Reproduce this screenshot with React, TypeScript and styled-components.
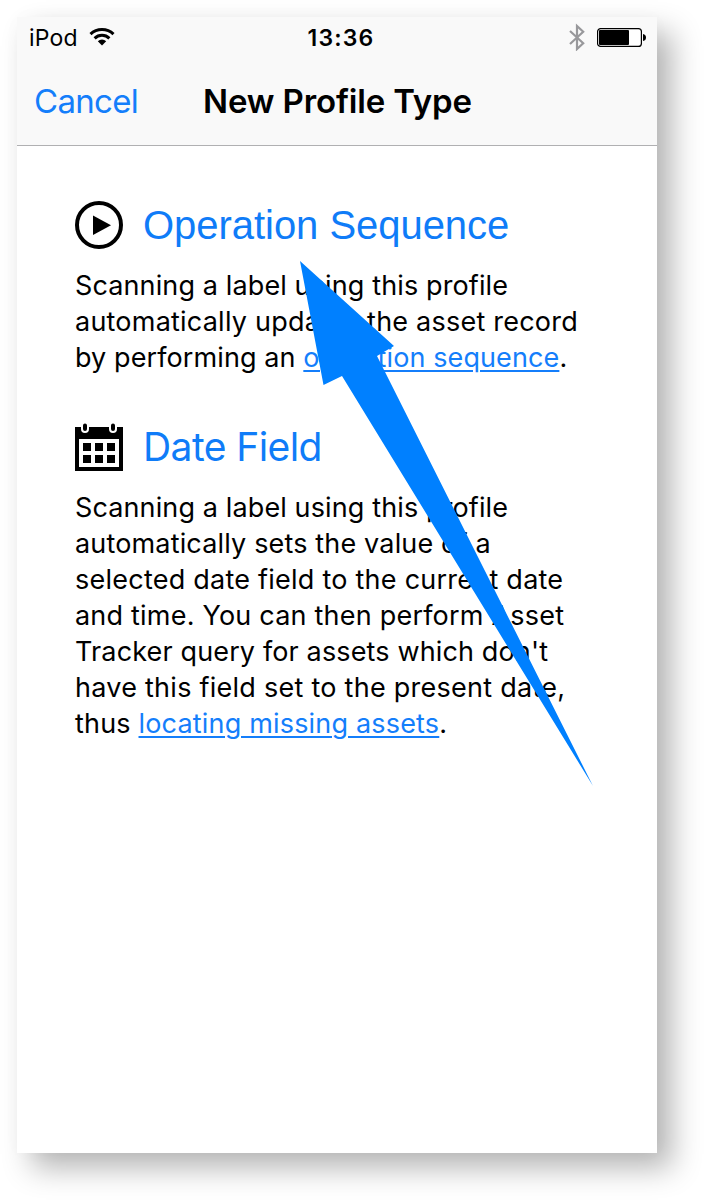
import React from "react";
import styled, { createGlobalStyle } from "styled-components";

const GlobalStyle = createGlobalStyle`
  * { box-sizing: border-box; }
  body { margin: 0; background: #fff; }
`;

const Page = styled.div`
  width: 705px;
  height: 1201px;
  padding: 17px 0 0 17px;
  overflow: hidden;
  font-family: Inter, "Liberation Sans", sans-serif;
`;

const Phone = styled.main`
  position: relative;
  width: 640px;
  height: 1136px;
  background: #fff;
  color: #000;
  box-shadow: 15px 15px 28px rgba(0, 0, 0, 0.29), 0 0 20px rgba(0, 0, 0, 0.02);
`;

const Header = styled.header`
  height: 129px;
  background: #f9f9f9;
  border-bottom: 1px solid #b0b0b2;
`;

const StatusBar = styled.div`
  display: grid;
  grid-template-columns: 1fr auto 1fr;
  align-items: center;
  height: 40px;
  padding: 0 11px 0 12px;
`;

const StatusGroup = styled.div<{ $end?: boolean }>`
  display: flex;
  align-items: center;
  justify-content: ${(p) => (p.$end ? "flex-end" : "flex-start")};
  gap: ${(p) => (p.$end ? 12 : 11)}px;
`;

const StatusText = styled.span<{ $strong?: boolean; $spacing: number }>`
  padding-top: 2px;
  padding-left: ${(p) => (p.$strong ? 7 : 0)}px;
  font-size: 23px;
  line-height: 38px;
  font-weight: ${(p) => (p.$strong ? 600 : 400)};
  letter-spacing: ${(p) => p.$spacing}px;
`;

const NavBar = styled.nav`
  display: grid;
  grid-template-columns: 1fr auto 1fr;
  align-items: center;
  height: 88px;
  padding: 0 16px 0 17px;
`;

const CancelButton = styled.button`
  justify-self: start;
  padding: 0;
  border: 0;
  background: none;
  color: #147efb;
  font: 400 33px/40px Inter, sans-serif;
  letter-spacing: -0.7px;
`;

const Title = styled.h1`
  margin: 0;
  font-size: 33px;
  line-height: 40px;
  font-weight: 600;
  letter-spacing: -0.15px;
`;

const Options = styled.div`
  display: flex;
  flex-direction: column;
  gap: 41px;
  padding: 49px 58px 0;
`;

const Option = styled.section`
  display: flex;
  flex-direction: column;
  gap: 13px;
`;

const OptionHeading = styled.div`
  display: flex;
  align-items: center;
  gap: 20px;
  height: 60px;
`;

const OptionTitle = styled.h2<{ $face?: string; $size: number; $spacing: number }>`
  margin: 0;
  color: #0f7cf8;
  font-family: ${(p) => p.$face ?? "Inter"}, sans-serif;
  font-size: ${(p) => p.$size}px;
  line-height: 60px;
  font-weight: 400;
  letter-spacing: ${(p) => p.$spacing}px;
  white-space: nowrap;
`;

const Description = styled.p`
  margin: 0;
  font-size: 27px;
  line-height: 36px;
  white-space: nowrap;
`;

const Line = styled.span<{ $spacing: number }>`
  display: block;
  letter-spacing: ${(p) => p.$spacing}px;
`;

const Link = styled.a`
  color: #147efb;
  text-decoration: underline;
  text-decoration-thickness: 2px;
  text-underline-offset: 3px;
`;

const Pointer = styled.svg`
  position: absolute;
  left: 0;
  top: 0;
  pointer-events: none;
`;

const WifiIcon = () => (
  <svg width="26" height="20" viewBox="0 0 26 20">
    <g fill="none" stroke="#000" strokeWidth="3">
      <path d="M1.5 7.2 A16.6 16.6 0 0 1 24.5 7.2" />
      <path d="M5.6 11.3 A10.8 10.8 0 0 1 20.4 11.3" />
    </g>
    <path d="M13 18.5 L8.8 14.3 A6 6 0 0 1 17.2 14.3 Z" />
  </svg>
);

const BluetoothIcon = () => (
  <svg width="16" height="28" viewBox="0 0 16 28">
    <path d="M1 8 L14.2 20.2 L8 26 V3 L14.2 8.8 L1 21" fill="none" stroke="#98989b" strokeWidth="2.2" />
  </svg>
);

const BatteryIcon = () => (
  <svg width="49" height="20" viewBox="0 -1 49 20">
    <rect x="0.6" y="0.6" width="43.8" height="17.8" rx="3" fill="#fff" stroke="#000" strokeWidth="1.2" />
    <rect x="2" y="2" width="30" height="15" rx="1" />
    <path d="M46 6 Q49 6.5 49 9.5 Q49 12.5 46 13 Z" />
  </svg>
);

const PlayIcon = () => (
  <svg width="48" height="48" viewBox="0 0 48 48">
    <circle cx="24" cy="24" r="22" fill="none" stroke="#000" strokeWidth="4" />
    <path d="M18 14.5 L36 24.3 L18 34 Z" />
  </svg>
);

const CalendarIcon = () => (
  <svg width="48" height="48" viewBox="0 0 48 48">
    <path d="M0 4 H48 V48 H0 Z" />
    <rect x="4" y="16" width="40" height="28" fill="#fff" />
    {[8, 20, 32].map((x) =>
      [20, 32].map((y) => <rect key={`${x}-${y}`} x={x} y={y} width="8" height="8" />)
    )}
    {[10, 38].map((x) => (
      <rect key={x} x={x - 3} y="-0.5" width="6" height="9.5" rx="3" stroke="#fff" strokeWidth="2" />
    ))}
  </svg>
);

export default function App() {
  return (
    <>
      <GlobalStyle />
      <Page>
        <Phone>
          <Header>
            <StatusBar>
              <StatusGroup>
                <StatusText $spacing={0.2}>iPod</StatusText>
                <WifiIcon />
              </StatusGroup>
              <StatusText $strong $spacing={1.2}>13:36</StatusText>
              <StatusGroup $end>
                <BluetoothIcon />
                <BatteryIcon />
              </StatusGroup>
            </StatusBar>
            <NavBar>
              <CancelButton>Cancel</CancelButton>
              <Title>New Profile Type</Title>
            </NavBar>
          </Header>
          <Options>
            <Option>
              <OptionHeading>
                <PlayIcon />
                <OptionTitle $face="Liberation Sans" $size={40} $spacing={-0.04}>Operation Sequence</OptionTitle>
              </OptionHeading>
              <Description>
                <Line $spacing={0.12}>Scanning a label using this profile</Line>
                <Line $spacing={0.22}>automatically updates the asset record</Line>
                <Line $spacing={0.1}>by performing an <Link>operation sequence</Link>.</Line>
              </Description>
            </Option>
            <Option>
              <OptionHeading>
                <CalendarIcon />
                <OptionTitle $size={39} $spacing={-0.58}>Date Field</OptionTitle>
              </OptionHeading>
              <Description>
                <Line $spacing={0.12}>Scanning a label using this profile</Line>
                <Line $spacing={0.16}>automatically sets the value of a</Line>
                <Line $spacing={0.24}>selected date field to the current date</Line>
                <Line $spacing={0.21}>and time. You can then perform Asset</Line>
                <Line $spacing={0.14}>Tracker query for assets which don't</Line>
                <Line $spacing={0.26}>have this field set to the present date,</Line>
                <Line $spacing={0.18}>thus <Link>locating missing assets</Link>.</Line>
              </Description>
            </Option>
          </Options>
          <Pointer width="640" height="800" viewBox="17 17 640 800">
            <path d="M300 261 L394 346 L377 356 L593 786 L342 376 L323.5 385 Z" fill="#0080ff" />
          </Pointer>
        </Phone>
      </Page>
    </>
  );
}
